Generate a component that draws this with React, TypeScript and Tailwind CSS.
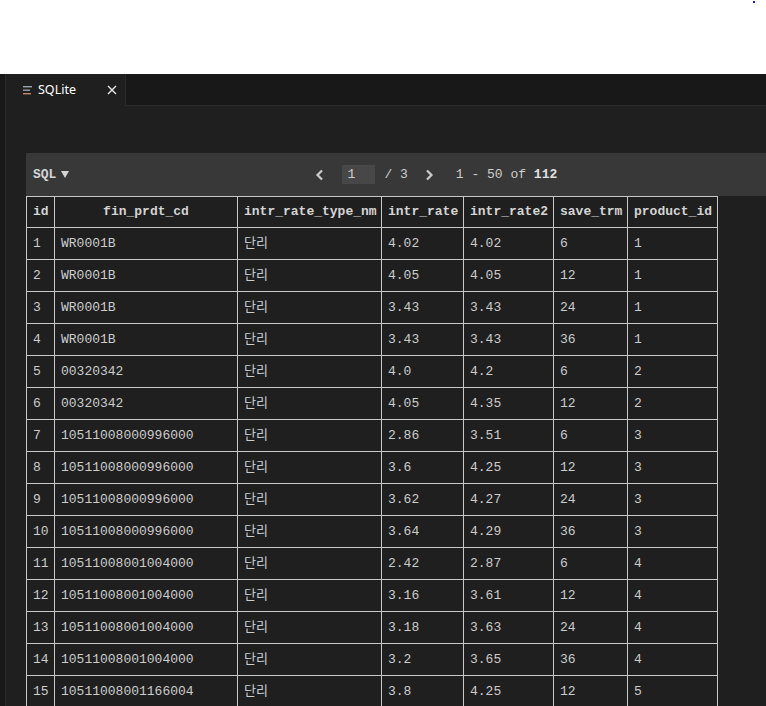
const rows: [number, string, string, string, string, string, string][] = [
  [1, 'WR0001B', '단리', '4.02', '4.02', '6', '1'],
  [2, 'WR0001B', '단리', '4.05', '4.05', '12', '1'],
  [3, 'WR0001B', '단리', '3.43', '3.43', '24', '1'],
  [4, 'WR0001B', '단리', '3.43', '3.43', '36', '1'],
  [5, '00320342', '단리', '4.0', '4.2', '6', '2'],
  [6, '00320342', '단리', '4.05', '4.35', '12', '2'],
  [7, '10511008000996000', '단리', '2.86', '3.51', '6', '3'],
  [8, '10511008000996000', '단리', '3.6', '4.25', '12', '3'],
  [9, '10511008000996000', '단리', '3.62', '4.27', '24', '3'],
  [10, '10511008000996000', '단리', '3.64', '4.29', '36', '3'],
  [11, '10511008001004000', '단리', '2.42', '2.87', '6', '4'],
  [12, '10511008001004000', '단리', '3.16', '3.61', '12', '4'],
  [13, '10511008001004000', '단리', '3.18', '3.63', '24', '4'],
  [14, '10511008001004000', '단리', '3.2', '3.65', '36', '4'],
  [15, '10511008001166004', '단리', '3.8', '4.25', '12', '5'],
];

const cols = [
  { name: 'id', w: 'w-[28px]' },
  { name: 'fin_prdt_cd', w: 'w-[183px]' },
  { name: 'intr_rate_type_nm', w: 'w-[144px]' },
  { name: 'intr_rate', w: 'w-[82px]' },
  { name: 'intr_rate2', w: 'w-[90px]' },
  { name: 'save_trm', w: 'w-[74px]' },
  { name: 'product_id', w: 'w-[90px]' },
];

const mono = "font-['Liberation_Mono','DejaVu_Sans_Mono','Noto_Sans_CJK_KR',monospace]";

const Chevron = ({ left }: { left?: boolean }) => (
  <svg width="10" height="12" viewBox="0 0 10 12" className="block">
    <polyline
      points={left ? '7,1.5 2.5,6 7,10.5' : '3,1.5 7.5,6 3,10.5'}
      fill="none"
      stroke="#cccccc"
      strokeWidth="2.2"
    />
  </svg>
);

export default function App() {
  return (
    <div className="w-[766px] h-[706px] overflow-hidden bg-white relative">
      <div className="absolute left-[753px] top-[1px] w-[2px] h-[2px] bg-[#1a1aff]" />
      <div className="h-[74px]" />
      <div className="flex h-[632px]">
        <div className="w-[6px] bg-[#181818] border-r border-[#2b2b2b] shrink-0" />
        <div className="flex-1 flex flex-col bg-[#1f1f1f] min-w-0">
          {/* tab bar */}
          <div className="flex h-[32px] bg-[#181818] shrink-0">
            <div className="w-[120px] flex items-center pl-[17px] bg-[#1f1f1f] border-r border-[#2b2b2b] font-['Noto_Sans','Open_Sans',sans-serif] text-[12.5px] text-white">
              <svg width="10" height="9" viewBox="0 0 10 9" className="mr-[5px]">
                <rect x="0" y="0" width="9" height="1.4" fill="#9aa4ad" />
                <rect x="0" y="3.5" width="7" height="1.4" fill="#9aa4ad" />
                <rect x="0" y="7" width="8" height="1.4" fill="#c48a6a" />
              </svg>
              <span>SQLite</span>
              <svg width="10" height="10" viewBox="0 0 10 10" className="ml-[31px]">
                <path d="M1 1 L9 9 M9 1 L1 9" stroke="#e8e8e8" strokeWidth="1.4" />
              </svg>
            </div>
            <div className="flex-1 border-b border-[#2b2b2b]" />
          </div>
          {/* editor */}
          <div className="pl-[20px] pt-[47px]">
            <div className={`h-[43px] bg-[#383838] flex items-center ${mono} text-[13px] text-[#cccccc]`}>
              <div className="pl-[7px] flex items-center gap-[5px] font-bold text-[#d4d4d4]">
                SQL
                <svg width="8" height="7" viewBox="0 0 8 7">
                  <polygon points="0,0 8,0 4,7" fill="#d4d4d4" />
                </svg>
              </div>
              <div className="flex items-center ml-[246px]">
                <Chevron left />
                <div className="ml-[17px] w-[33px] h-[19px] bg-[#474747] pl-[5px] leading-[19px]">1</div>
                <span className="ml-[9px]">/ 3</span>
                <div className="ml-[16px]">
                  <Chevron />
                </div>
                <span className="ml-[22px]">
                  1 - 50 of <span className="font-bold text-[#e0e0e0]">112</span>
                </span>
              </div>
            </div>
            <table className={`border-collapse table-fixed w-[692px] ${mono} text-[13px] text-[#cccccc]`}>
              <colgroup>
                {cols.map((c) => (
                  <col key={c.name} className={c.w} />
                ))}
              </colgroup>
              <thead>
                <tr className="h-[31px]">
                  {cols.map((c) => (
                    <th key={c.name} className="border border-[#c8c8c8] px-[6px] font-bold text-center text-[#d4d4d4] whitespace-nowrap">
                      {c.name}
                    </th>
                  ))}
                </tr>
              </thead>
              <tbody>
                {rows.map((r) => (
                  <tr key={r[0]} className="h-[32px]">
                    {r.map((v, i) => (
                      <td key={i} className="border border-[#c8c8c8] px-[6px] text-left whitespace-nowrap">
                        {v}
                      </td>
                    ))}
                  </tr>
                ))}
              </tbody>
            </table>
          </div>
        </div>
      </div>
    </div>
  );
}
